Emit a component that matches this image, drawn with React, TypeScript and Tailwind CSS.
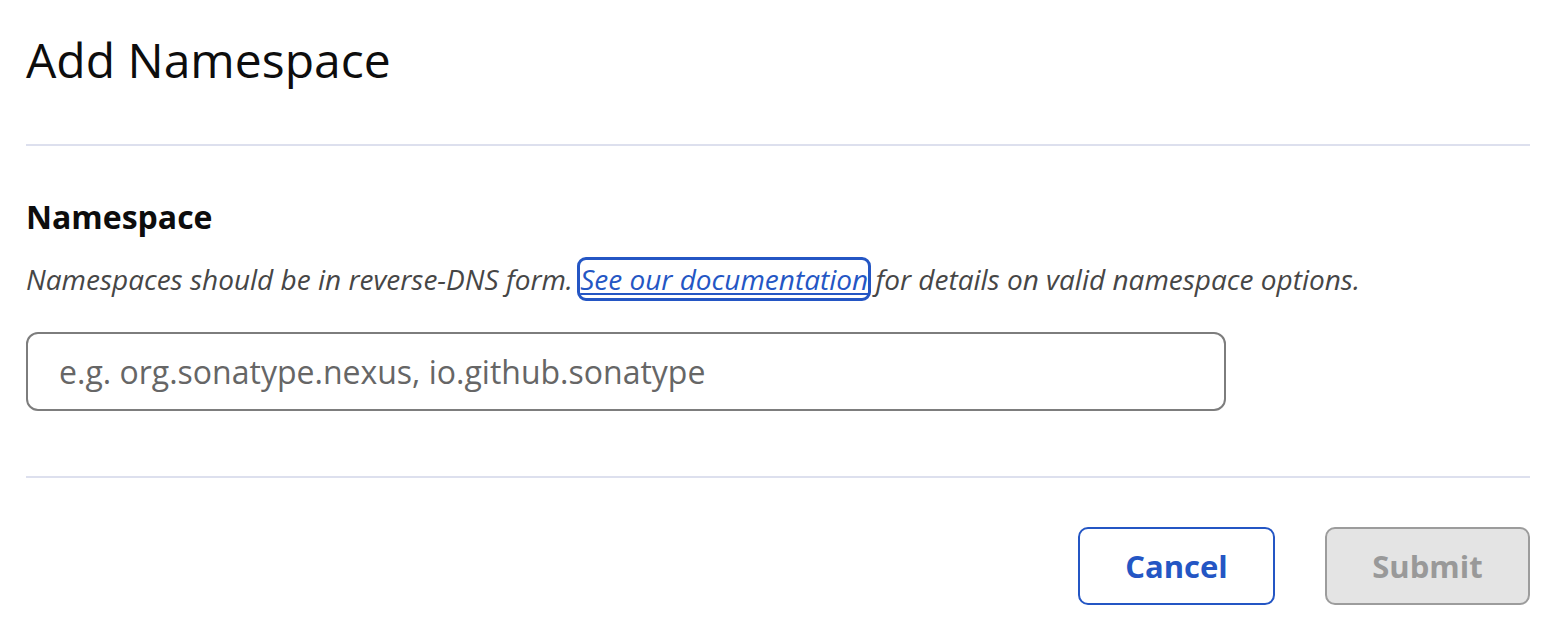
import React from "react";

export default function App() {
  return (
    <div
      className="min-h-[638px] bg-white pl-[26px] pr-[32px] pt-[28px] text-[#111111]"
      style={{ fontFamily: '"Open Sans", "Liberation Sans", sans-serif' }}
    >
      <h1 className="text-[48px] font-normal leading-[64px] text-[#0d0d0d]">
        Add Namespace
      </h1>
      <div className="mt-[52px] h-[2px] w-full bg-[#dde0ee]" />
      <form className="flex flex-col" onSubmit={(e) => e.preventDefault()}>
        <label
          htmlFor="namespace"
          className="mt-[51px] text-[32px] font-bold leading-[40px] text-[#0d0d0d]"
        >
          Namespace
        </label>
        <p className="mt-[23px] text-[28px] italic leading-[38px] text-[#464646]">
          Namespaces should be in reverse-DNS form.{" "}
          <a
            href="#"
            className="rounded-[6px] text-[#2456c4] underline decoration-[2px] underline-offset-[3px] outline-[3px] outline-solid outline-[#2456c4] outline-offset-0"
          >
            See our documentation
          </a>{" "}
          for details on valid namespace options.
        </p>
        <input
          id="namespace"
          type="text"
          placeholder="e.g. org.sonatype.nexus, io.github.sonatype"
          className="mt-[34px] h-[79px] w-[1200px] rounded-[12px] border-2 border-[#7d7d7d] bg-white pl-[31px] text-[32px] text-[#222] outline-none placeholder:text-[#666666]"
        />
        <div className="mt-[65px] h-[2px] w-full bg-[#dde0ee]" />
        <div className="mt-[49px] flex justify-end gap-[50px]">
          <button
            type="button"
            className="h-[78px] w-[197px] rounded-[10px] border-2 border-[#2456c4] bg-white text-[31px] font-bold text-[#2456c4]"
          >
            Cancel
          </button>
          <button
            type="submit"
            disabled
            className="h-[78px] w-[205px] rounded-[10px] border-2 border-[#9c9c9c] bg-[#e4e4e4] text-[31px] font-bold text-[#999999]"
          >
            Submit
          </button>
        </div>
      </form>
    </div>
  );
}
